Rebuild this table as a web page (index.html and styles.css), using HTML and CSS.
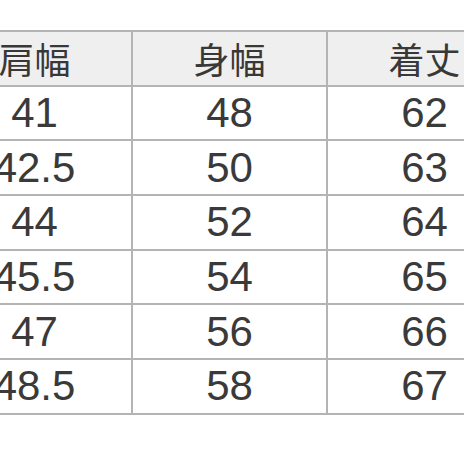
FILE: index.html
```html
<!DOCTYPE html>
<html lang="ja">
<head>
<meta charset="utf-8">
<link rel="stylesheet" href="styles.css">
</head>
<body>
<div class="page">
  <div class="table">
    <div class="cell head">肩幅</div><div class="cell head">身幅</div><div class="cell head">着丈</div>
    <div class="cell">41</div><div class="cell">48</div><div class="cell">62</div>
    <div class="cell">42.5</div><div class="cell">50</div><div class="cell">63</div>
    <div class="cell">44</div><div class="cell">52</div><div class="cell">64</div>
    <div class="cell">45.5</div><div class="cell">54</div><div class="cell">65</div>
    <div class="cell">47</div><div class="cell">56</div><div class="cell">66</div>
    <div class="cell">48.5</div><div class="cell">58</div><div class="cell">67</div>
  </div>
</div>
</body>
</html>
```

FILE: styles.css
```css
html, body {
  margin: 0;
  padding: 0;
  background: #ffffff;
  overflow: hidden;
  width: 464px;
  height: 464px;
}
.page {
  padding-top: 30px;
  width: 464px;
  overflow: hidden;
}
.table {
  margin-left: -64px;
  width: 600px;
  display: grid;
  grid-template-columns: 193px 193px 193px;
  grid-template-rows: repeat(7, 52.67px);
  gap: 2px;
  padding: 2px;
  background: #b4b4b4;
}
.cell {
  background: #ffffff;
  display: flex;
  align-items: center;
  justify-content: center;
  font-family: "Liberation Sans", Arial, sans-serif;
  font-size: 42px;
  color: #3a3a3a;
  line-height: 1;
}
.head {
  background: #efefef;
  font-family: "Noto Sans CJK JP", "Noto Sans", sans-serif;
  font-size: 36px;
  color: #383838;
}
```
